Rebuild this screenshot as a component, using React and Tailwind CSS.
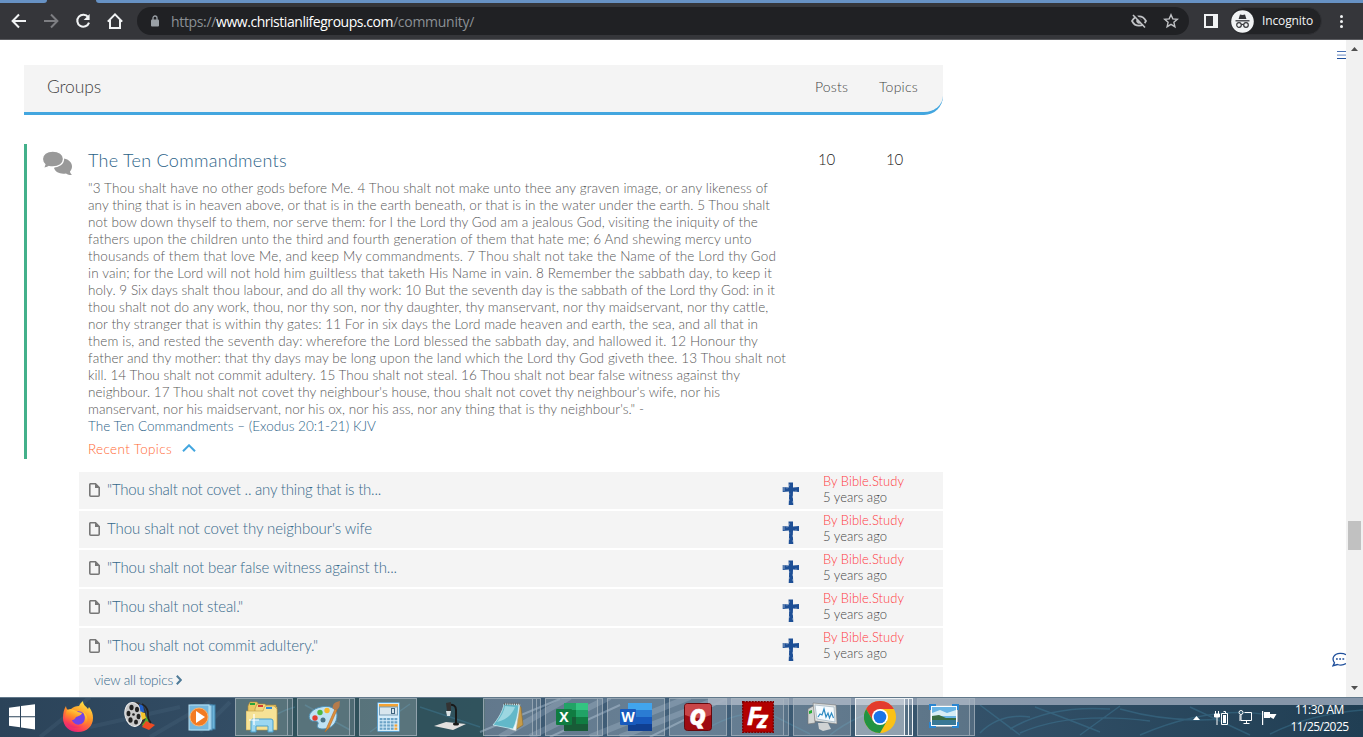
import React, { useLayoutEffect, useRef, useState } from "react";

const verses = [
  [680, '"3 Thou shalt have no other gods before Me. 4 Thou shalt not make unto thee any graven image, or any likeness of'],
  [682, "any thing that is in heaven above, or that is in the earth beneath, or that is in the water under the earth. 5 Thou shalt"],
  [670, "not bow down thyself to them, nor serve them: for I the Lord thy God am a jealous God, visiting the iniquity of the"],
  [664, "fathers upon the children unto the third and fourth generation of them that hate me; 6 And shewing mercy unto"],
  [688, "thousands of them that love Me, and keep My commandments. 7 Thou shalt not take the Name of the Lord thy God"],
  [684, "in vain; for the Lord will not hold him guiltless that taketh His Name in vain. 8 Remember the sabbath day, to keep it"],
  [687, "holy. 9 Six days shalt thou labour, and do all thy work: 10 But the seventh day is the sabbath of the Lord thy God: in it"],
  [680, "thou shalt not do any work, thou, nor thy son, nor thy daughter, thy manservant, nor thy maidservant, nor thy cattle,"],
  [670, "nor thy stranger that is within thy gates: 11 For in six days the Lord made heaven and earth, the sea, and all that in"],
  [670, "them is, and rested the seventh day: wherefore the Lord blessed the sabbath day, and hallowed it. 12 Honour thy"],
  [698, "father and thy mother: that thy days may be long upon the land which the Lord thy God giveth thee. 13 Thou shalt not"],
  [652, "kill. 14 Thou shalt not commit adultery. 15 Thou shalt not steal. 16 Thou shalt not bear false witness against thy"],
  [632, "neighbour. 17 Thou shalt not covet thy neighbour's house, thou shalt not covet thy neighbour's wife, nor his"],
  [556, "manservant, nor his maidservant, nor his ox, nor his ass, nor any thing that is thy neighbour's.\" -"],
];

const topics = [
  [274, '"Thou shalt not covet .. any thing that is th...'],
  [265, "Thou shalt not covet thy neighbour's wife"],
  [290, '"Thou shalt not bear false witness against th...'],
  [136, '"Thou shalt not steal."'],
  [211, '"Thou shalt not commit adultery."'],
];

// text spaced out (or in) to a given width
function Fit({ w, children, className = "" }) {
  const ref = useRef(null);
  const [spacing, setSpacing] = useState(0);

  useLayoutEffect(() => {
    const el = ref.current;
    el.style.letterSpacing = "0px";
    const natural = el.getBoundingClientRect().width;
    const s = (w - natural) / children.length;
    el.style.letterSpacing = `${s}px`;
    setSpacing(s);
  }, [w, children]);

  return (
    <span ref={ref} className={`inline-block whitespace-pre ${className}`} style={{ letterSpacing: `${spacing}px` }}>
      {children}
    </span>
  );
}

function BrowserBar() {
  return (
    <header className="h-10 shrink-0 bg-[#35363a] border-b border-[#5a5b5f] flex flex-col">
      <div className="h-[3px] shrink-0 flex justify-between">
        <div className="w-[47px] bg-[#6792c4] rounded-br-[4px]" />
        <div className="w-[1267px] bg-[#6792c4] rounded-bl-[4px]" />
      </div>
      <div className="h-9 flex items-center">
        <svg className="ml-[11px] w-4 h-4" viewBox="0 0 16 16" fill="none" stroke="#f1f3f4" strokeWidth="2">
          <path d="M15 8H2M8 1.5L1.6 8L8 14.5" />
        </svg>
        <svg className="ml-4 w-4 h-4" viewBox="0 0 16 16" fill="none" stroke="#7d7e82" strokeWidth="2">
          <path d="M1 8h13M8 1.5L14.4 8L8 14.5" />
        </svg>
        <svg className="ml-4 w-4 h-4" viewBox="0 0 16 16" fill="none" stroke="#f1f3f4" strokeWidth="2.1">
          <path d="M13.2 4.2A6 6 0 1 0 14 9.6" />
          <path d="M14.6 1v6H8.6z" fill="#f1f3f4" stroke="none" />
        </svg>
        <svg className="ml-4 w-4 h-4" viewBox="0 0 16 16" fill="none" stroke="#f1f3f4" strokeWidth="2">
          <path d="M.8 8.6L8 1.4l7.2 7.2M3 7v8h10V7" />
        </svg>
        <div className="ml-[14px] w-[1052px] h-7 rounded-full bg-[#202124] flex items-center">
          <svg className="ml-[14px] w-2 h-3 shrink-0" viewBox="0 0 8 12">
            <path d="M2 5V3a2 2 0 0 1 4 0v2" fill="none" stroke="#9aa0a6" strokeWidth="1.3" />
            <rect y="4.5" width="8" height="7" rx="1" fill="#9aa0a6" />
          </svg>
          <div className="ml-3 flex text-[14px] leading-7 pt-px font-['Open_Sans','Noto_Sans',sans-serif] text-[#8b9095]">
            <Fit w={45}>https://</Fit>
            <Fit w={177} className="text-white">www.christianlifegroups.com</Fit>
            <Fit w={81}>/community/</Fit>
          </div>
          <svg className="ml-auto mr-4 w-4 h-4" viewBox="0 0 16 16" fill="none" stroke="#c0c2c5">
            <path d="M1 8C2.6 4.8 5 3.3 8 3.3s5.4 1.5 7 4.7c-1.6 3.2-4 4.7-7 4.7S2.6 11.2 1 8z" strokeWidth="1.7" />
            <circle cx="8" cy="8" r="2.3" fill="#c0c2c5" />
            <path d="M3.3 1.3l12 12" stroke="#202124" strokeWidth="2" />
            <path d="M2 2l12 12.5" strokeWidth="1.6" />
          </svg>
          <svg className="mr-[10px] w-4 h-4" viewBox="0 0 16 16" fill="none" stroke="#c0c2c5" strokeWidth="1.4">
            <path d="M8 1.8l1.8 4.1 4.5.4-3.4 3 1 4.4L8 11.4l-3.9 2.3 1-4.4-3.4-3 4.5-.4z" />
          </svg>
        </div>
        <svg className="ml-[15px] w-[14px] h-[14px]" viewBox="0 0 14 14">
          <path d="M0 0h14v14H0zM2 2v10h7V2z" fill="#f1f3f4" fillRule="evenodd" />
        </svg>
        <div className="ml-[12px] w-[92px] h-7 rounded-full bg-[#222326] border border-[#303135] flex items-center">
          <svg className="w-[23px] h-[23px] shrink-0" viewBox="0 0 23 23">
            <circle cx="11.5" cy="11.5" r="11.3" fill="#f1f3f4" />
            <path d="M7.6 9l1.4-4.6 2.5.6 2.5-.6L15.4 9z" fill="#35363a" />
            <path d="M4.5 10.8h14" stroke="#35363a" strokeWidth="1.3" />
            <g fill="none" stroke="#35363a" strokeWidth="1.2">
              <circle cx="8" cy="15" r="2.3" />
              <circle cx="15" cy="15" r="2.3" />
              <path d="M10.3 14.7q1.2-.7 2.4 0" />
            </g>
          </svg>
          <span className="ml-2 text-[12px] leading-6 text-[#f1f3f4] font-['Open_Sans','Noto_Sans',sans-serif]">
            <Fit w={51}>Incognito</Fit>
          </span>
        </div>
        <div className="ml-[18px] flex flex-col gap-[2px]">
          <i className="w-[3px] h-[3px] rounded-full bg-[#f1f3f4]" />
          <i className="w-[3px] h-[3px] rounded-full bg-[#f1f3f4]" />
          <i className="w-[3px] h-[3px] rounded-full bg-[#f1f3f4]" />
        </div>
      </div>
    </header>
  );
}

function Cross() {
  return (
    <svg className="w-[18px] h-6" viewBox="0 0 18 24">
      <path d="M6.5.5H11V5.500l6-.5v5L11 9.500l-.2 5 .5 8.500H6.700l.4-9-.2-4.500L.7 10V5l6.100.6z" fill="#1d4f96" />
      <path d="M2 5v4M5 5.800v.8M14 8.500v1M7.200 12h1M10 15h1M7 18h1M10 20h1M7 3h1" stroke="#f4f4f4" strokeWidth=".5" />
    </svg>
  );
}

function TopicRow({ title, w }) {
  return (
    <div className="h-[37px] bg-[#f4f4f4] flex">
      <svg className="ml-[10px] mt-[11px] w-[11px] h-[14px]" viewBox="0 0 11 14">
        <path d="M1.5.8h5L10.2 4.5v7.7a1 1 0 0 1-1 1H1.800a1 1 0 0 1-1-1V1.800a1 1 0 0 1 .7-1z" fill="none" stroke="#777" strokeWidth="1.6" />
        <path d="M6 .5v4.5h4.6z" fill="#777" />
      </svg>
      <div className="ml-[7px] w-[675px] text-[15px] leading-[34px] text-[#34688a]">
        <Fit w={w}>{title}</Fit>
      </div>
      <div className="w-[41px] pt-[10px]">
        <Cross />
      </div>
      <div className="pt-px text-[13px] leading-4">
        <div className="text-[#ff3b42]">
          <Fit w={81}>By Bible.Study</Fit>
        </div>
        <div className="text-[#444]">
          <Fit w={64}>5 years ago</Fit>
        </div>
      </div>
    </div>
  );
}

function Forum() {
  return (
    <main className="ml-6 w-[919px] pt-[25px] font-[Lato,'Open_Sans',sans-serif] font-light">
      <div className="h-[50px] bg-[#f4f4f4] border-b-[3px] border-[#43a6df] rounded-br-[19px] flex items-center text-[#444]">
        <div className="ml-[23px] w-[768px] text-[17.5px] leading-[22px] pb-[3px]">
          <Fit w={54}>Groups</Fit>
        </div>
        <div className="w-16 text-[14px] pb-1">
          <Fit w={33}>Posts</Fit>
        </div>
        <div className="text-[14px] pb-1">
          <Fit w={39}>Topics</Fit>
        </div>
      </div>

      <section className="mt-[29px] h-[315px] border-l-[3px] border-[#43b08a] flex">
        <svg className="ml-[15px] mt-[6px] w-[31px] h-[26px] shrink-0" viewBox="0 0 31 26">
          <path d="M19 8.5h3c5 1 8 4 8 8 0 2-.9 3.7-2 5 .1 1.3.9 2.4 2 3.5-2 .2-4.2-.5-6-1.6-5.5 1-10.5-1-12-5.4z" fill="#999" />
          <path d="M10.8 1C17 1 21.5 4.3 21.5 9s-4.5 8-10.7 8c-1.3 0-2.6-.1-3.8-.5C5.2 17.7 3 18.3.8 18c1.1-1 1.9-2.2 2.1-3.5C1.3 12.9.4 11 .4 9 .4 4.3 4.7 1 10.8 1z" fill="#999" stroke="#fff" strokeWidth="1.3" />
        </svg>
        <div className="ml-[15px] w-[730px] text-[13.5px] leading-[17px] text-[#585858]">
          <h2 className="h-9 pt-[5px] text-[18px] leading-[22px] text-[#2b6287]">
            <Fit w={199}>The Ten Commandments</Fit>
          </h2>
          {verses.map(([w, line]) => (
            <div key={line} className="h-[17px]">
              <Fit w={w}>{line}</Fit>
            </div>
          ))}
          <div className="h-[17px] text-[#2b6287]">
            <Fit w={288}>The Ten Commandments – (Exodus 20:1-21) KJV</Fit>
          </div>
          <div className="mt-[6px] flex items-center text-[#ff6a35]">
            <Fit w={84}>Recent Topics</Fit>
            <svg className="ml-[10px] mb-[3px] w-[14px] h-2" viewBox="0 0 14 8" fill="none" stroke="#43a6df" strokeWidth="2">
              <path d="M1 7.3l6-6 6 6" />
            </svg>
          </div>
        </div>
        <div className="w-[68px] pt-[6px] text-[15px] leading-[18px] text-[#222]">
          <Fit w={17}>10</Fit>
        </div>
        <div className="pt-[6px] text-[15px] leading-[18px] text-[#222]">
          <Fit w={17}>10</Fit>
        </div>
      </section>

      <section className="mt-[13px] ml-[55px] flex flex-col gap-[2px]">
        {topics.map(([w, title]) => (
          <TopicRow key={title} title={title} w={w} />
        ))}
        <div className="h-[37px] pl-[15px] bg-[#f4f4f4] flex text-[13.5px] leading-[27px] text-[#34688a]">
          <Fit w={79}>view all topics</Fit>
          <svg className="ml-[3px] mt-2 w-[6px] h-[10px]" viewBox="0 0 6 10" fill="none" stroke="#4f7b98" strokeWidth="2">
            <path d="M.8.8l4 4.2-4 4.2" />
          </svg>
        </div>
      </section>
    </main>
  );
}

function Scrollbar() {
  return (
    <div className="w-[17px] bg-[#f1f1f1] flex flex-col items-center pt-[7px] pb-[7px]">
      <svg className="w-[7px] h-1" viewBox="0 0 7 4"><path d="M0 4l3.5-4L7 4z" fill="#505050" /></svg>
      <div className="mt-[470px] w-[13px] h-[29px] bg-[#c1c1c1]" />
      <svg className="mt-auto w-[7px] h-1" viewBox="0 0 7 4"><path d="M0 0l3.5 4L7 0z" fill="#505050" /></svg>
    </div>
  );
}

function Firefox() {
  return (
    <svg className="w-8 h-8" viewBox="0 0 32 32">
      <defs>
        <linearGradient id="ff" x1=".8" y1="0" x2=".3" y2="1">
          <stop offset="0" stopColor="#fff04a" />
          <stop offset=".45" stopColor="#ff9426" />
          <stop offset=".8" stopColor="#ff4253" />
          <stop offset="1" stopColor="#e3207e" />
        </linearGradient>
      </defs>
      <path d="M4 5c0 2 1 3 2 4l3-1c2-2 5-3 8-3 1-2 2-3.5 4-5 0 4 3 5 5 8l1-2c3 4 4 7 4 11 0 8-6 14-15 14S1 25 1 17C1 12 2 8 4 5z" fill="url(#ff)" />
      <circle cx="16.5" cy="17" r="6.8" fill="#7542e5" />
      <path d="M5 9c4-2 8 0 11 2l4 1c-1 3-4 3-6 4-1 1-1 3-4 3-1 5 6 7 11 3 2-2 3-7 0-11 5 3 6 9 2 13-6 6-19 3-20-6 0-4 1-6 2-9z" fill="url(#ff)" />
    </svg>
  );
}

function MovieMaker() {
  return (
    <svg className="w-8 h-8" viewBox="0 0 32 32">
      <path d="M17 20l5-5 3 5-6 6z" fill="#5aac2b" />
      <path d="M18 26l4-6 9 4-6 5z" fill="#ef4b23" />
      <ellipse cx="12.5" cy="13" rx="9.5" ry="12" fill="#333" transform="rotate(-12 12 13)" />
      <ellipse cx="9.5" cy="13.5" rx="8.5" ry="12" fill="#c8c8c8" stroke="#eee" transform="rotate(-12 9.5 13.5)" />
      <path d="M15 3l4 1.5 1.5 7-4-1z" fill="#2260c8" />
      <path d="M16.5 11l4.500 1 1 5-4 2z" fill="#f5c62c" />
      <g fill="#222">
        <ellipse cx="7.5" cy="6.5" rx="2.1" ry="2.8" />
        <ellipse cx="13" cy="8.5" rx="2" ry="2.8" />
        <ellipse cx="4.5" cy="12.5" rx="1.9" ry="2.8" />
        <ellipse cx="14.5" cy="15.5" rx="1.9" ry="2.8" />
        <ellipse cx="6.5" cy="19" rx="2.1" ry="2.8" />
        <ellipse cx="12" cy="21" rx="2" ry="2.5" />
        <circle cx="9.5" cy="13.5" r="1.3" />
      </g>
      <path d="M18 3q7 4 6 12 0 4 3 7" fill="none" stroke="#222" strokeWidth="1.6" />
    </svg>
  );
}

function MediaPlayer() {
  return (
    <svg className="w-7 h-7" viewBox="0 0 28 28">
      <rect x="6" y="2" width="21" height="24" fill="#6db4da" stroke="#3f82aa" />
      <rect x="3" y="2" width="21" height="25" fill="#9dd0ea" stroke="#4b8cb5" />
      <rect x="1" y="2" width="20" height="25" fill="#75b7dc" stroke="#b9e2f3" />
      <circle cx="11" cy="14" r="9" fill="#f37b22" stroke="#fbb36b" />
      <path d="M8 8l9 6-9 6z" fill="#fff" />
    </svg>
  );
}

function Explorer() {
  return (
    <svg className="w-8 h-8" viewBox="0 0 32 32">
      <path d="M2 5l2-4h7l2 3h17v23H2z" fill="#eac965" stroke="#b18b34" strokeWidth=".6" />
      <rect x="4" y="2" width="5" height="2" fill="#28a43a" />
      <path d="M9 8l2-5h8l2 3h10v22H9z" fill="#f3d981" stroke="#b18b34" strokeWidth=".6" />
      <rect x="12" y="4" width="5" height="2" fill="#d73d2f" />
      <path d="M0 10h17l2-5h9l3 3v21H0z" fill="#f6e296" stroke="#c09c45" strokeWidth=".6" />
      <rect x="20" y="6" width="6" height="2" fill="#2d8bd8" />
      <path d="M5 31V20q0-2 2-2h18q2 0 2 2v11h-5v-6H10v6z" fill="#9bd7f2" stroke="#4ba0ca" />
      <path d="M8 13v11M3 19h10" stroke="#fff" strokeWidth="1.2" />
    </svg>
  );
}

function Paint() {
  return (
    <svg className="w-8 h-8" viewBox="0 0 32 32">
      <path d="M13 6c8-2 16 1 16 8 0 8-5 14-14 14-5 0-7-2-5-5 1-3-3-3-6-3-6-3-2-12 9-14z" fill="#bfe2f3" stroke="#4f91b6" />
      <circle cx="7" cy="17" r="2.7" fill="#e43d30" />
      <circle cx="12" cy="11.5" r="2.7" fill="#4eb842" />
      <circle cx="19" cy="9.5" r="2.7" fill="#f6b62b" />
      <circle cx="15" cy="19" r="2.5" fill="#4b7385" />
      <path d="M19 26l8-18 2 1-8 18-4 4z" fill="#de8f3a" stroke="#b56a23" strokeWidth=".6" />
      <path d="M25 8c-1-4 1-7 7-8-1 4 1 5-3 9z" fill="#b57b4b" />
    </svg>
  );
}

function Calculator() {
  const keys = [];
  for (let r = 0; r < 4; r++) for (let c = 0; c < 5; c++) keys.push([c, r]);
  return (
    <svg className="w-[23px] h-[30px]" viewBox="0 0 23 30">
      <rect x=".5" y=".5" width="22" height="29" rx="1" fill="#d6edfa" stroke="#5c9fcb" />
      <rect x="2" y="2" width="19" height="3" fill="#f3a334" />
      <rect x="2.5" y="5" width="18" height="8" fill="#d8e6ee" stroke="#7a9fb7" />
      <rect x="14.500" y="6.500" width="3" height="5" fill="none" stroke="#3e6480" />
      {keys.map(([c, r]) => (
        <rect key={`${c}${r}`} x={2.7 + c * 3.7} y={16 + r * 3.2} width="2.8" height="2.2" fill={c === 4 && r > 1 ? "#f3a334" : "#6ba2c6"} />
      ))}
    </svg>
  );
}

function DocCamera() {
  return (
    <svg className="w-8 h-8" viewBox="0 0 32 32">
      <path d="M0 25l12-4 20 2-13 6z" fill="#e3e0df" />
      <path d="M22 24V9q0-6-7-5" fill="none" stroke="#191919" strokeWidth="2" />
      <path d="M12 2l5-1v9h-4z" fill="#333" />
      <path d="M12 10h5l-1 5h-3z" fill="#d8e0e3" />
      <ellipse cx="22" cy="23" rx="3" ry="1.5" fill="#191919" />
    </svg>
  );
}

function Notepad() {
  return (
    <svg className="w-8 h-8" viewBox="0 0 32 32">
      <path d="M26 4l3 2 2 18-8 5z" fill="#c69b48" stroke="#8b6a2a" strokeWidth=".6" />
      <path d="M12 3h16l-4 27-6-2z" fill="#f3f6f5" stroke="#a7b6b8" strokeWidth=".6" />
      <path d="M12 3l15 1c-1 10-3 18-6 24L1 24C6 18 11 10 12 3z" fill="#62b8c9" stroke="#d5f2f6" strokeWidth=".7" />
      <path d="M13 5l10 1c-3 8-8 12-18 15C9 16 12 10 13 5z" fill="#b5e4eb" opacity=".7" />
      <path d="M12 3h16" stroke="#666" strokeWidth="2.5" strokeDasharray="1 1.2" />
    </svg>
  );
}

function Excel() {
  return (
    <svg className="w-8 h-7" viewBox="0 0 32 28">
      <path d="M8 0h12v7H8z" fill="#21a366" /><path d="M20 0h12v7H20z" fill="#33c481" />
      <path d="M8 7h12v7H8z" fill="#107c41" /><path d="M20 7h12v7H20z" fill="#21a366" />
      <path d="M8 14h12v14H8z" fill="#185c37" /><path d="M20 14h12v7H20z" fill="#107c41" />
      <path d="M20 21h12v7H20z" fill="#185c37" />
      <rect y="6" width="16" height="16" rx="1" fill="#107c41" />
      <text x="8" y="19" textAnchor="middle" fontSize="14" fontWeight="bold" fill="#fff" fontFamily="Open Sans, sans-serif">X</text>
    </svg>
  );
}

function Word() {
  return (
    <svg className="w-8 h-7" viewBox="0 0 32 28">
      <path d="M8 0h24v7H8z" fill="#41a5ee" />
      <path d="M8 7h24v7H8z" fill="#2b7cd3" />
      <path d="M8 14h24v7H8z" fill="#185abd" />
      <path d="M8 21h24v7H8z" fill="#103f91" />
      <rect y="6" width="16" height="16" rx="1" fill="#185abd" />
      <text x="8" y="19" textAnchor="middle" fontSize="14" fontWeight="bold" fill="#fff" fontFamily="Open Sans, sans-serif">W</text>
    </svg>
  );
}

function Quicken() {
  return (
    <svg className="w-7 h-7 overflow-visible" viewBox="0 0 28 28">
      <rect x=".5" y=".5" width="27" height="27" rx="3" fill="#9e0b12" stroke="#65090d" />
      <path d="M1 3q0-2 2-2h22q2 0 2 2v9Q14 18 1 12z" fill="#c94548" />
      <text x="13.5" y="21.5" textAnchor="middle" fontSize="22" fontWeight="800" fontStyle="italic" fill="#fff" stroke="#fff" strokeWidth=".6" fontFamily="Open Sans, sans-serif">Q</text>
    </svg>
  );
}

function FileZilla() {
  return (
    <svg className="w-8 h-8 overflow-visible" viewBox="0 0 32 32">
      <rect x=".75" y=".75" width="30.5" height="30.5" fill="#b30000" stroke="#7d0000" strokeWidth="1.5" strokeDasharray="2 1" />
      <text x="5" y="24" fontSize="25" fontWeight="bold" fontStyle="italic" fill="#fff" stroke="#fff" strokeWidth=".6" fontFamily="Open Sans, sans-serif">
        F<tspan dx="-3" dy="3" fontSize="23">z</tspan>
      </text>
    </svg>
  );
}

function Monitor() {
  return (
    <svg className="w-8 h-8" viewBox="0 0 32 32">
      <path d="M2 8l7-4v18l-7 1z" fill="#d3d6d5" stroke="#777" strokeWidth=".6" />
      <path d="M3 10l3-1v3l-3 1z" fill="#27aa35" />
      <path d="M12 22h10l3 6-8 2-4-2z" fill="#cfd2d3" />
      <path d="M7 2l23 2 1 19-22-3z" fill="#e0e3e3" stroke="#777" strokeWidth=".6" />
      <path d="M9 4l19 2 1 15-18-3z" fill="#f5fbff" stroke="#90a6b5" strokeWidth=".6" />
      <path d="M12 16l2-3 2 1 2-6 2 8 2-4 1.5 5 2-5 2 5" fill="none" stroke="#2c8ac2" strokeWidth="1.2" />
    </svg>
  );
}

function Chrome() {
  return (
    <svg className="w-8 h-8" viewBox="0 0 32 32">
      <circle cx="16" cy="16" r="16" fill="#fbc116" />
      <path d="M16 8h13.86A16 16 0 0 0 2.14 8L9.1 20z" fill="#e33b2e" />
      <path d="M2.14 8A16 16 0 0 0 16 32l6.9-12H9.1z" fill="#229342" />
      <circle cx="16" cy="16" r="8" fill="#fff" />
      <circle cx="16" cy="16" r="6.3" fill="#1a73e8" />
    </svg>
  );
}

function PhotoViewer() {
  return (
    <svg className="w-[30px] h-6 mb-[3px]" viewBox="0 0 30 24">
      <rect x="1.5" y="1.5" width="27" height="21" fill="#fff" />
      <rect x="3" y="3" width="24" height="18" fill="#68b4e5" />
      <path d="M3 9l8-3 7 3 9-3v6H3z" fill="#d7edf5" />
      <path d="M3 12l7-1 7 3h10v2H3z" fill="#396c42" />
      <path d="M3 16h24v5H3z" fill="#3a7896" />
      <path d="M1 6V1h6M23 1h6v5M29 18v5h-6M7 23H1v-5" fill="none" stroke="#2b86d1" strokeWidth="2" />
    </svg>
  );
}

// stack = how many extra windows are piled behind the button
const apps = [
  { Icon: Firefox },
  { Icon: MovieMaker },
  { Icon: MediaPlayer },
  { Icon: Explorer, open: true, stack: 1 },
  { Icon: Paint, open: true, stack: 1 },
  { Icon: Calculator, open: true },
  { Icon: DocCamera },
  { Icon: Notepad, open: true, stack: 2 },
  { Icon: Excel, open: true, stack: 1 },
  { Icon: Word, open: true },
  { Icon: Quicken, open: true },
  { Icon: FileZilla, open: true, stack: 1 },
  { Icon: Monitor, open: true },
  { Icon: Chrome, open: true, stack: 2, active: true },
  { Icon: PhotoViewer, open: true, stack: 1 },
];

function TaskButton({ Icon, open, stack = 0, active }) {
  const line = active ? "border-[#eef2f5]" : "border-[#a9b7c0]/70";
  if (!open) {
    return (
      <div className="w-[58px] h-10 flex items-center justify-center">
        <Icon />
      </div>
    );
  }
  return (
    <div className="w-[58px] h-[38px] mt-px flex">
      <div className={`flex-1 border flex items-center justify-center ${line} ${active ? "bg-white/45" : "bg-white/20"}`}>
        <Icon />
      </div>
      {stack > 0 && <div className={`${stack === 2 ? "w-1" : "w-[5px]"} border border-l-0 bg-white/15 ${line}`} />}
      {stack > 1 && <div className={`w-1 border border-l-0 bg-white/15 ${line}`} />}
    </div>
  );
}

function Taskbar() {
  return (
    <footer className="relative h-10 shrink-0 flex overflow-hidden bg-linear-to-r from-[#2b4359] via-[#42607a] to-[#203e53]">
      {/* wallpaper showing through the glass */}
      <svg className="absolute inset-0 w-full h-full" viewBox="0 0 1363 40" preserveAspectRatio="none">
        <rect x="235" width="250" height="40" fill="#2e5257" opacity=".75" />
        <g stroke="#a6bdd2" fill="none" opacity=".45">
          <path d="M500 40L570 0M530 40L610 0M590 40L690 0M620 40L710 5" strokeWidth="6" opacity=".6" />
          <path d="M480 35L560 2M550 40L620 8M650 40L730 0" strokeWidth="2" />
        </g>
        <g stroke="#458aa8" fill="none" opacity=".35" strokeWidth="1.5">
          <path d="M1010 32q40-24 100-20M1020 36q50-22 130-12M1035 10q40 15 65 25M1080 38l40-29M1120 12q50 14 100 10M1140 38q70-30 130-20M1190 10l60 28M1270 37q40-20 93-24M980 8l40 30M980 36q20-20 50-16" />
          <path d="M250 35q25-20 45-25M305 8l45 25M370 35l40-28M420 10l60 20M700 36q30-20 60-20M760 12l50 25M830 38q25-20 60-28" />
        </g>
        <g stroke="#6d8aa2" fill="none" opacity=".13" strokeWidth="4">
          <path d="M40 40L90 0M90 30L180 10M150 40L210 5M200 35l30-30" />
        </g>
        <rect y="0" x="708" width="655" height="8" fill="#91a0b3" opacity=".9" />
        <path d="M0 .5h1363" stroke="#61788a" />
      </svg>
      <div className="relative w-[49px] flex items-center">
        <svg className="ml-[9px] w-[26px] h-[26px]" viewBox="0 0 26 26" fill="#fff">
          <path d="M0 3.7L11 2.3v10H0zM12 2.1L26 .2v12.1H12zM0 13.3h11v10L0 21.8zM12 13.3h14v12.3L12 23.5z" />
        </svg>
      </div>
      <div className="relative flex gap-1">
        {apps.map((app, i) => (
          <TaskButton key={i} {...app} />
        ))}
      </div>
      <div className="relative ml-auto flex text-white">
        <svg className="mt-[19px] w-[7px] h-[5px]" viewBox="0 0 7 5"><path d="M0 4l3.5-4L7 4z" fill="#fff" /></svg>
        <svg className="ml-[14px] mt-[13px] w-[15px] h-4" viewBox="0 0 15 16" fill="none" stroke="#fff">
          <path d="M1.5 1v4M4.5 1v4M3 7v8" />
          <path d="M.5 4h5v3h-5z" fill="#fff" />
          <path d="M7.5 3.5h6v11h-6zM9.5 1.5h2v2" />
          <path d="M9 5h3v8H9z" fill="#fff" stroke="none" />
        </svg>
        <svg className="ml-[9px] mt-[12px] w-[15px] h-4" viewBox="0 0 15 16" fill="none" stroke="#fff">
          <circle cx="3" cy="3.5" r="2" />
          <path d="M3 5.5v6h10.5v-8H6.5M2 6v6M8.5 11.500v3M5.5 14.5h6" />
        </svg>
        <svg className="ml-[9px] mt-[13px] w-[15px] h-4" viewBox="0 0 15 16" fill="#fff">
          <path d="M0 1h1.2v14H0zM2 2h6v6H2zM8 4h6.500l-3 5L8 7z" />
        </svg>
        <div className="ml-[6px] w-[73px] mr-[7px] pt-[4px] text-center text-[12px] leading-[17px] whitespace-nowrap font-['Open_Sans','Noto_Sans',sans-serif]">
          <div><Fit w={49}>11:30 AM</Fit></div>
          <div><Fit w={58}>11/25/2025</Fit></div>
        </div>
      </div>
    </footer>
  );
}

export default function App() {
  return (
    <div className="w-[1363px] h-[737px] overflow-hidden flex flex-col bg-white">
      <BrowserBar />
      <div className="flex-1 min-h-0 overflow-hidden flex">
        <Forum />
        <div className="ml-auto flex flex-col justify-between items-end pt-[11px] pb-[30px]">
          <svg className="w-[9px] h-2" viewBox="0 0 9 8">
            <path d="M0 0h9v1H0z" fill="#4a72b5" />
            <path d="M0 3.500h9v1.200H0z" fill="#7c98ca" />
            <path d="M0 7h9v1H0z" fill="#1f4f9b" />
          </svg>
          <svg className="w-[14px] h-[15px]" viewBox="0 0 14 15">
            <path d="M14 11.6c-2.5 1.5-5.5 1.9-8.5.9L1 13.7l1.5-2.9C-.8 6.5 2 1.6 8 1.3c2.5-.1 4.5.4 6 1.5" fill="none" stroke="#1f4f9b" strokeWidth="1.3" />
            <path d="M4 7h1.8M7.2 7H9M10.4 7h1.8" stroke="#1f4f9b" strokeWidth="1.5" />
          </svg>
        </div>
        <Scrollbar />
      </div>
      <Taskbar />
    </div>
  );
}
